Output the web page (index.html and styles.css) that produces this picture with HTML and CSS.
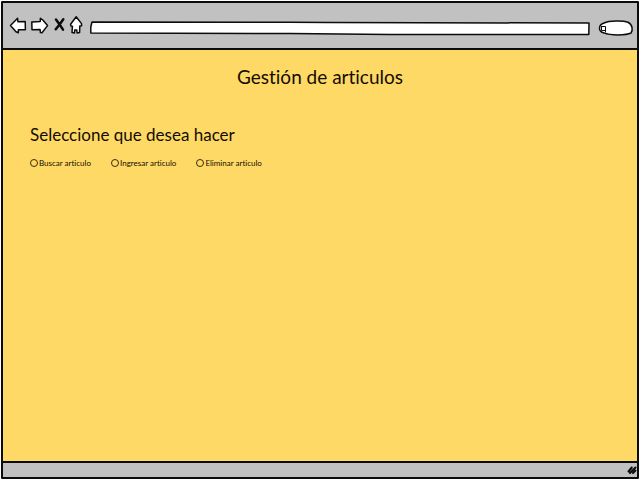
FILE: index.html
```html
<!DOCTYPE html>
<html lang="es">
<head>
<meta charset="utf-8">
<meta name="viewport" content="width=device-width, initial-scale=1">
<title>Gestión de articulos</title>
<link rel="stylesheet" href="styles.css">
</head>
<body>
<div class="window">
  <header class="toolbar">
    <nav class="nav" aria-label="Navegador">
      <button class="tool" type="button" aria-label="Atrás">
        <svg width="17" height="20" viewBox="0 0 17 20"><path class="shape" d="M.5 10.500 7.600 3.300 7.900 6.700l7.300-.2.200 8.200-7 .1-.1 3L6 16.700Z"/></svg>
      </button>
      <button class="tool" type="button" aria-label="Adelante">
        <svg width="17" height="20" viewBox="0 0 17 20"><path class="shape" d="M-.2 6.900 8.200 6.500l.2-3.200 2.400 1.700 4.700 5.600L10 17.800l-1.600-.2-.3-3L0 14.700Z"/></svg>
      </button>
      <button class="tool" type="button" aria-label="Detener">
        <svg width="11" height="20" viewBox="0 0 11 20"><path class="cross" d="M2 4.600 5.600 9.500 9 14.600M9.300 4.200 5.600 9.500 1.700 14.300"/></svg>
      </button>
      <button class="tool" type="button" aria-label="Inicio">
        <svg width="12" height="20" viewBox="0 0 12 20"><path class="shape" d="M6.200 1.800.6 9.200l.3 1.800 1.500.2L2 17.600l2.500.3.2-2.800 2-.2.400 3 2.500-.3.2-6.500 1.800-.3-.1-2.200Z"/></svg>
      </button>
    </nav>
    <div class="field address">
      <svg class="outline" viewBox="0 0 500 14" preserveAspectRatio="none"><path class="box" d="M2 1 200 1.200 240 1.600 499 2 498.800 13.500 300 13.400 200 12.500.8 12 .8 6Z"/></svg>
      <input class="entry" type="text" aria-label="Dirección">
    </div>
    <div class="field search">
      <svg class="outline" viewBox="0 0 35 16"><path class="box" d="M6 3C11 .6 25 .4 30 2.200 35 4.500 34.800 11 33 13 28 15.600 12 15.500 6 12.900 0 12 0 5 6 3Z"/><path class="lens" d="M3.500 6.500H7.500V12M3.500 6.500V10.500H7.500"/></svg>
      <input class="entry" type="search" aria-label="Buscar">
    </div>
  </header>
  <main class="page">
    <h1 class="title">Gestión de articulos</h1>
    <fieldset class="choices">
      <legend class="question">Seleccione que desea hacer</legend>
      <div class="options">
        <label class="option"><input class="radio" type="radio" name="accion">Buscar articulo</label>
        <label class="option"><input class="radio" type="radio" name="accion">Ingresar articulo</label>
        <label class="option"><input class="radio" type="radio" name="accion">Eliminar articulo</label>
      </div>
    </fieldset>
  </main>
  <footer class="status">
    <svg width="10" height="10" viewBox="0 0 10 10"><path class="grip" d="M1.500 6.500 4.800 2.500M3 8 8.500 2.500M6 8 8.500 5.500"/></svg>
  </footer>
</div>
</body>
</html>
```
FILE: styles.css
```css
* {
  box-sizing: border-box;
}

body {
  margin: 0;
  background: #fff;
  color: #140c00;
  font-family: "Lato", "Liberation Sans", sans-serif;
  font-variant-ligatures: none;
}

.window {
  display: flex;
  flex-direction: column;
  min-height: calc(100vh - 2px);
  margin: 1px;
  border: 2px solid #0c0c0c;
  border-radius: 1px;
}

.toolbar {
  display: flex;
  align-items: center;
  gap: 8px;
  height: 47px;
  padding: 0 4px 2px 7px;
  border-bottom: 2px solid #0c0c0c;
  background: #c1c1c1;
}

.nav {
  display: flex;
  gap: 5px;
}

.tool {
  display: block;
  padding: 0;
  border: 0;
  background: none;
}

.tool svg,
.status svg {
  display: block;
  overflow: visible;
}

.shape,
.box {
  fill: #fff;
  stroke: #0c0c0c;
  stroke-width: 1.5;
  stroke-linejoin: round;
}

.box {
  vector-effect: non-scaling-stroke;
}

.cross,
.grip,
.lens {
  fill: none;
  stroke: #0c0c0c;
  stroke-width: 2.5;
  stroke-linecap: round;
}

.grip {
  stroke-width: 2;
}

.lens {
  stroke-width: 1;
}

.field {
  position: relative;
  height: 14px;
  margin-top: 6px;
}

.address {
  flex: 1;
}

.search {
  width: 35px;
  height: 16px;
}

.outline {
  position: absolute;
  inset: 0;
  width: 100%;
  height: 100%;
  overflow: visible;
}

.entry {
  position: relative;
  display: block;
  width: 100%;
  height: 100%;
  padding: 0 10px;
  border: 0;
  background: transparent;
  font: 10px "Lato", sans-serif;
}

.page {
  flex: 1;
  padding: 15px 27px;
  background: #ffd966;
}

.title {
  margin: 0;
  font-size: 19px;
  font-weight: 400;
  line-height: 24px;
  text-align: center;
}

.choices {
  margin: 35px 0 0;
  padding: 0;
  border: 0;
}

.question {
  padding: 0;
  font-size: 17px;
  line-height: 22px;
}

.options {
  display: flex;
  gap: 20px;
  margin-top: 12px;
}

.option {
  display: flex;
  align-items: center;
  gap: 1px;
  font-size: 8px;
  line-height: 10px;
}

.radio {
  appearance: none;
  width: 8px;
  height: 8px;
  margin: 0;
  border: 1px solid #3a2c08;
  border-radius: 50%;
}

.radio:checked {
  background: #3a2c08;
}

.status {
  display: flex;
  align-items: center;
  justify-content: flex-end;
  height: 16px;
  border-top: 2px solid #0c0c0c;
  background: #c1c1c1;
}
```
